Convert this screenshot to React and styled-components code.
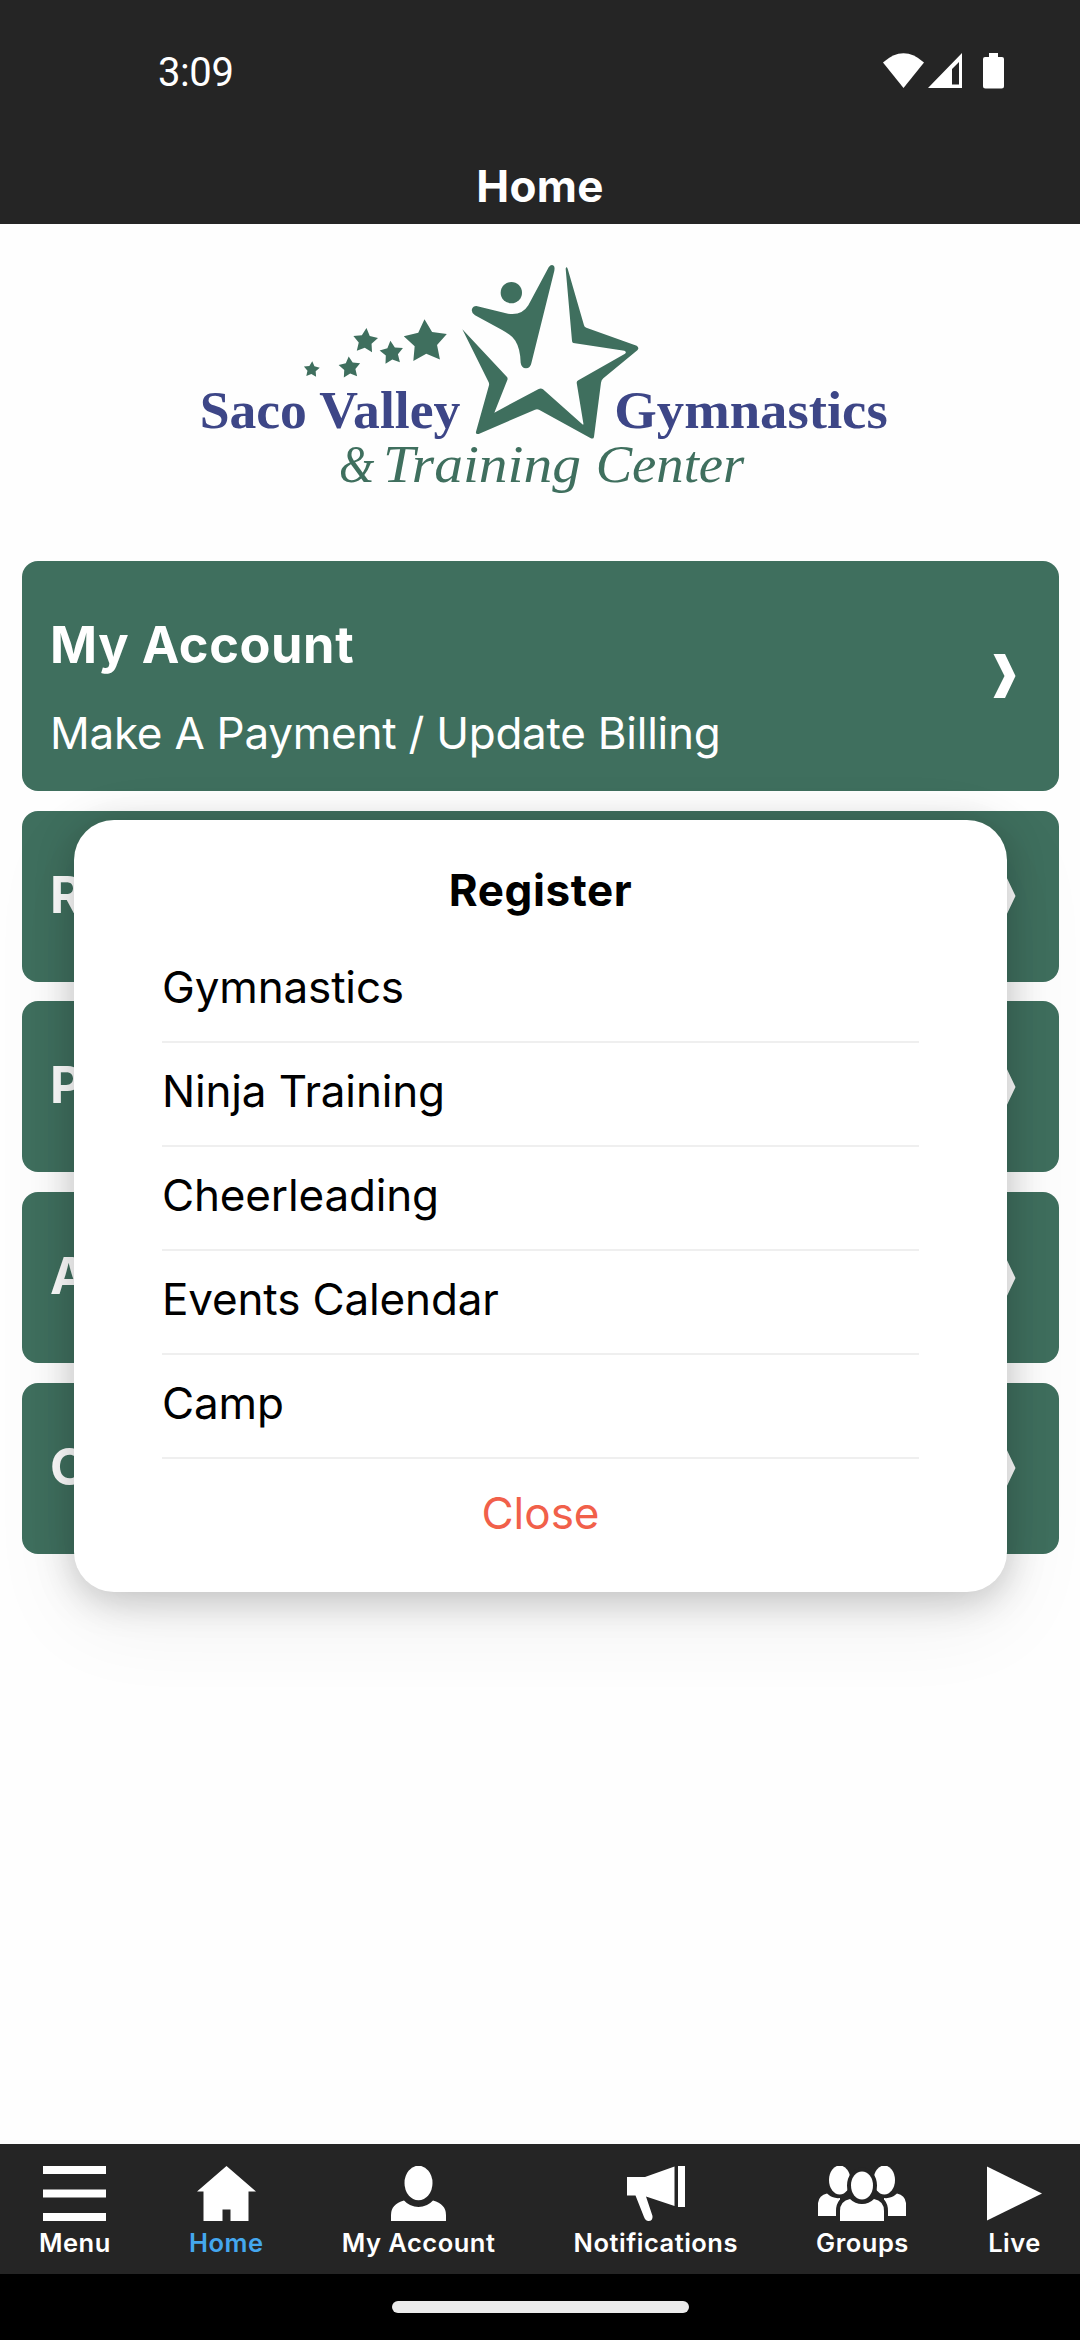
import React from "react";
import styled, { createGlobalStyle } from "styled-components";

const BAR = "#252525";
const GREEN = "#3f6f5e";
const NAVY = "#3d4687";

const GlobalStyle = createGlobalStyle`
  * {
    box-sizing: border-box;
  }
  body {
    margin: 0;
    background: #fefefe;
    font-family: Inter, Roboto, "Liberation Sans", sans-serif;
  }
  button {
    border: 0;
    padding: 0;
    background: none;
    font: inherit;
    cursor: pointer;
  }
`;

const Screen = styled.div`
  position: relative;
  width: 1080px;
  height: 2340px;
  display: flex;
  flex-direction: column;
  overflow: hidden;
`;

const Header = styled.header`
  height: 224px;
  background: ${BAR};
  color: white;
`;

const StatusBar = styled.div`
  height: 142px;
  padding: 0 75px 0 158px;
  display: flex;
  align-items: center;
  justify-content: space-between;
`;

const Clock = styled.span`
  font-family: Roboto, sans-serif;
  font-size: 40px;
  letter-spacing: -0.4px;
  line-height: 46px;
  margin-top: 3px;
`;

const Title = styled.h1`
  margin: 0;
  padding-top: 18px;
  text-align: center;
  font-size: 44px;
  font-weight: 700;
  line-height: 52px;
  letter-spacing: 0.3px;
`;

const Content = styled.main`
  flex: 1;
  padding: 16px 21px 0 22px;
`;

const LogoBox = styled.div`
  height: 321px;
  display: flex;
  justify-content: center;
  align-items: flex-start;
`;

const CardList = styled.div`
  display: flex;
  flex-direction: column;
  gap: 19.7px;
`;

const Card = styled.a`
  height: ${(props) => (props.$tall ? 230 : 171)}px;
  padding: 0 43px 0 28px;
  border-radius: 16px;
  background: ${GREEN};
  color: white;
  display: flex;
  align-items: center;
  justify-content: space-between;
`;

const CardText = styled.div`
  display: flex;
  flex-direction: column;
  gap: 32px;
  padding-top: ${(props) => (props.$tall ? 21 : 0)}px;
  padding-bottom: ${(props) => (props.$tall ? 0 : 3)}px;
`;

const CardTitle = styled.div`
  font-size: 50.5px;
  font-weight: 700;
  line-height: 60px;
  letter-spacing: 0.6px;
`;

const CardNote = styled.div`
  font-size: 44px;
  line-height: 52px;
  letter-spacing: -0.25px;
`;

const Dialog = styled.section`
  position: absolute;
  left: 74px;
  top: 820px;
  width: 933px;
  height: 772px;
  padding: 44px 88px 0;
  border-radius: 40px;
  background: white;
  color: black;
  font-size: 44px;
  letter-spacing: -0.15px;
  box-shadow: 0 7px 38px rgba(0, 0, 0, 0.22), 0 26px 90px rgba(0, 0, 0, 0.07);
`;

const DialogTitle = styled.h2`
  margin: 0 0 23px;
  text-align: center;
  font-size: 44px;
  font-weight: 700;
  line-height: 52px;
  letter-spacing: 0.6px;
`;

const Option = styled.div`
  height: 104px;
  padding-top: 22px;
  border-bottom: 2px solid #efefef;
  line-height: 52px;
`;

const CloseButton = styled.button`
  display: block;
  width: 100%;
  margin-top: 28px;
  color: #f1604a;
  line-height: 52px;
  letter-spacing: 0;
`;

const TabBar = styled.nav`
  height: 130px;
  padding: 22px 38px 0 39px;
  background: ${BAR};
  display: flex;
  justify-content: space-between;
`;

const Tab = styled.a`
  display: flex;
  flex-direction: column;
  align-items: center;
  color: ${(props) => (props.$active ? "#44a7ee" : "white")};
  font-size: 25.5px;
  font-weight: 600;
  line-height: 30px;
  letter-spacing: 0.5px;

  svg {
    display: block;
    margin-bottom: 7px;
    fill: white;
  }
`;

const GestureArea = styled.div`
  height: 66px;
  background: black;
  display: flex;
  justify-content: center;
  align-items: center;
`;

const GestureHandle = styled.div`
  width: 297px;
  height: 12px;
  border-radius: 6px;
  background: #ebebeb;
`;

const LogoName = styled.text`
  font-family: "Liberation Serif", serif;
  font-size: 158px;
  font-weight: 700;
  fill: ${NAVY};
`;

const LogoTagline = styled.text`
  font-family: "Liberation Serif", serif;
  font-size: 156px;
  font-style: italic;
  fill: ${GREEN};
`;

function Star({ cx, cy, r, turn }) {
  const points = Array.from({ length: 10 }, (v, i) => {
    const a = ((turn - 90 + i * 36) * Math.PI) / 180;
    const d = i % 2 === 0 ? r : r * 0.52;
    return `${cx + d * Math.cos(a)},${cy + d * Math.sin(a)}`;
  }).join(" ");
  return <polygon points={points} />;
}

function Logo() {
  return (
    <svg width="720" height="270" viewBox="0 0 2160 810">
      <g fill={GREEN}>
        <Star cx={734} cy={306} r={68} turn={-3} />
        <Star cx={553} cy={303} r={39} turn={5} />
        <Star cx={632} cy={339} r={37} turn={-6} />
        <Star cx={506} cy={383} r={34} turn={-5} />
        <Star cx={392} cy={389} r={25} turn={4} />
        <circle cx="991" cy="158" r="32" />
        <path d="M886 198L975 220Q1021 230 1042 196L1103 82Q1110 72 1118 77Q1122 80 1120 92L1051 370Q1048 385 1035 385Q1021 384 1019 368Q1018 326 1003 302Q993 286 962 269L882 226Q870 218 873 207Q876 198 886 198Z" />
        <path d="M844 268L978 411Q981 415 979 420L940 518L1073 447Q1080 443 1086 448L1204 553Q1208 556 1207 550L1187 428Q1187 423 1192 421L1332 341Q1338 335 1330 332L1177 309Q1173 307 1173 302L1154 86Q1156 78 1160 86L1209 256Q1210 261 1216 263L1367 317Q1376 323 1369 331L1267 415Q1261 420 1260 428L1239 590Q1238 599 1228 594L1074 509Q1068 506 1062 509L893 582Q883 584 885 575L924 436Q925 431 923 427Z" />
      </g>
      <LogoName x="56" y="565" textLength="782" lengthAdjust="spacingAndGlyphs">
        Saco Valley
      </LogoName>
      <LogoName x="1300" y="565" textLength="820" lengthAdjust="spacingAndGlyphs">
        Gymnastics
      </LogoName>
      <LogoTagline x="474" y="726" textLength="106" lengthAdjust="spacingAndGlyphs">
        &amp;
      </LogoTagline>
      <LogoTagline x="606" y="726" textLength="594" lengthAdjust="spacingAndGlyphs">
        Training
      </LogoTagline>
      <LogoTagline x="1244" y="726" textLength="446" lengthAdjust="spacingAndGlyphs">
        Center
      </LogoTagline>
    </svg>
  );
}

function StatusIcons() {
  return (
    <svg width="122" height="36" viewBox="0 0 122 36" fill="white">
      <path d="M0 9.500Q20.500 -9 41 9.500L20.500 35Z" />
      <path fillRule="evenodd" d="M79 0V35H45ZM76 9L69 16V31.500H76Z" />
      <path d="M106 0H115V4H119Q121 4 121 6V33Q121 35.500 118.500 35.500H102.500Q100 35.500 100 33V6Q100 4 102 4H106Z" />
    </svg>
  );
}

function Chevron() {
  return (
    <svg width="23" height="44" viewBox="0 0 23 44" fill="white">
      <path d="M0.500 0H12L22.500 22L12 44H0.500L11.500 22Z" />
    </svg>
  );
}

const MenuIcon = () => (
  <svg width="63" height="55">
    <path d="M0 0H63V8H0ZM0 23.500H63V31.500H0ZM0 47H63V55H0Z" />
  </svg>
);

const HomeIcon = () => (
  <svg width="59" height="55">
    <path d="M29.500 0L59 25.500H51.500V55H33.500V43.500H25.500V55H6.500V25.500H0Z" />
  </svg>
);

const AccountIcon = () => (
  <svg width="55" height="55">
    <ellipse cx="27.5" cy="17" rx="14" ry="17.3" />
    <path d="M0 55V49Q0 38 13 34.500Q19 41 27.500 41Q36 41 42 34.500Q55 38 55 49V55Z" />
  </svg>
);

const NotificationsIcon = () => (
  <svg width="58" height="55">
    <path d="M0 11H18L47.500 0.500V40L19 30.500L25.500 50Q26 55 21.500 55Q18.500 55 17 51L8.500 29.500H0Z" />
    <path d="M51 0H58V41H51Z" />
  </svg>
);

const GroupsIcon = () => (
  <svg width="88" height="55">
    <ellipse cx="21.7" cy="14" rx="10.7" ry="14.500" />
    <ellipse cx="66.3" cy="14" rx="10.7" ry="14.500" />
    <path d="M0 50V37Q1 29 9 27.500Q15 33 22 32V50Z" />
    <path d="M88 50V37Q87 29 79 27.500Q73 33 66 32V50Z" />
    <g stroke={BAR} strokeWidth="8" paintOrder="stroke">
      <path d="M22 59V45Q22 35 32 33Q37 38 44 38Q51 38 56 33Q66 35 66 45V59Z" />
      <ellipse cx="44" cy="19.5" rx="11" ry="14" />
    </g>
  </svg>
);

const LiveIcon = () => (
  <svg width="55" height="55">
    <path d="M0 0.500L55 27.500L0 54.500Z" />
  </svg>
);

const cards = [
  { title: "My Account", note: "Make A Payment / Update Billing" },
  { title: "R" },
  { title: "P" },
  { title: "A" },
  { title: "C" },
];

const options = [
  "Gymnastics",
  "Ninja Training",
  "Cheerleading",
  "Events Calendar",
  "Camp",
];

const tabs = [
  { label: "Menu", Icon: MenuIcon },
  { label: "Home", Icon: HomeIcon, active: true },
  { label: "My Account", Icon: AccountIcon },
  { label: "Notifications", Icon: NotificationsIcon },
  { label: "Groups", Icon: GroupsIcon },
  { label: "Live", Icon: LiveIcon },
];

export default function App() {
  return (
    <Screen>
      <GlobalStyle />
      <Header>
        <StatusBar>
          <Clock>3:09</Clock>
          <StatusIcons />
        </StatusBar>
        <Title>Home</Title>
      </Header>
      <Content>
        <LogoBox>
          <Logo />
        </LogoBox>
        <CardList>
          {cards.map((card) => (
            <Card key={card.title} $tall={Boolean(card.note)}>
              <CardText $tall={Boolean(card.note)}>
                <CardTitle>{card.title}</CardTitle>
                {card.note && <CardNote>{card.note}</CardNote>}
              </CardText>
              <Chevron />
            </Card>
          ))}
        </CardList>
      </Content>
      <TabBar>
        {tabs.map(({ label, Icon, active }) => (
          <Tab key={label} $active={active}>
            <Icon />
            {label}
          </Tab>
        ))}
      </TabBar>
      <GestureArea>
        <GestureHandle />
      </GestureArea>
      <Dialog>
        <DialogTitle>Register</DialogTitle>
        {options.map((option) => (
          <Option key={option}>{option}</Option>
        ))}
        <CloseButton>Close</CloseButton>
      </Dialog>
    </Screen>
  );
}
